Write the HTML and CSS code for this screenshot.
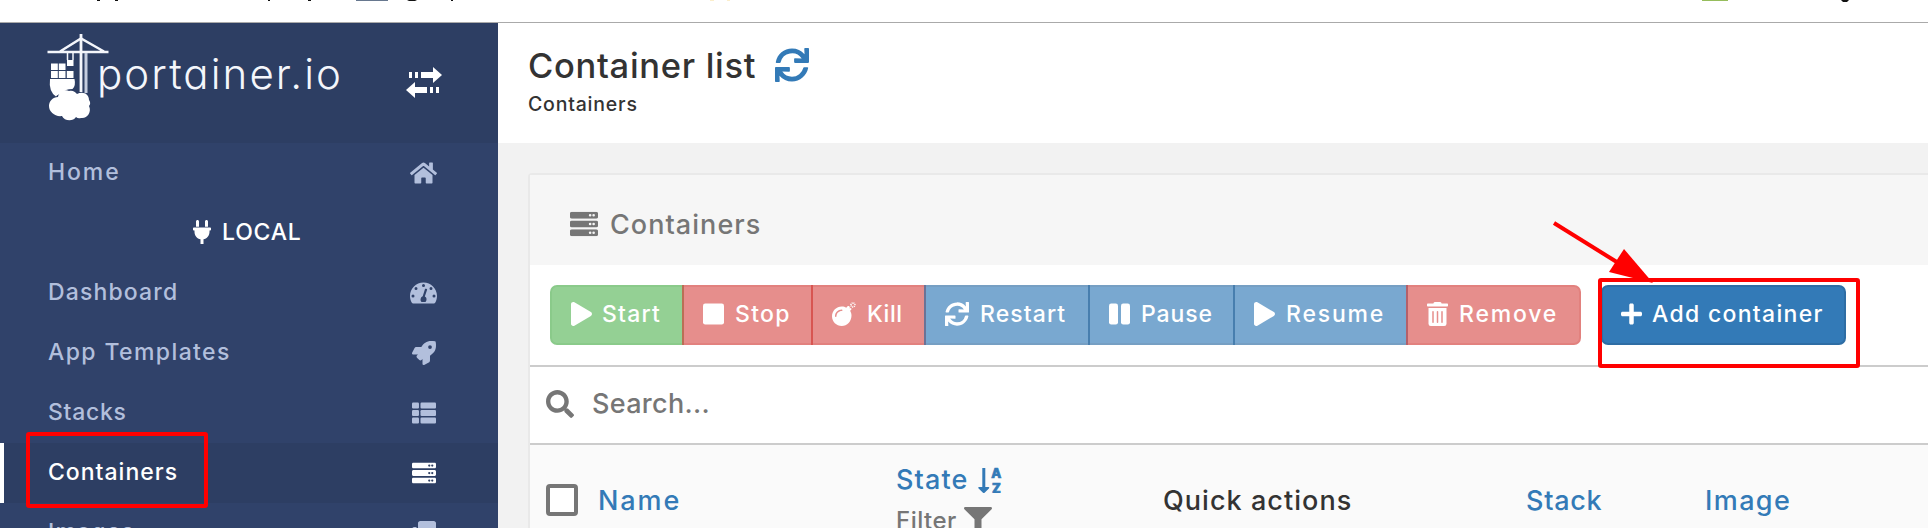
FILE: index.html
```html
<!DOCTYPE html>
<html lang="en">
<head>
<meta charset="utf-8">
<title>Portainer</title>
<link rel="stylesheet" href="styles.css">
</head>
<body>
<svg class="defs" width="0" height="0" aria-hidden="true">
  <symbol id="play" viewBox="0 0 448 512"><path d="M424.4 214.7L72.4 6.6C43.8-10.3 0 6.1 0 47.9V464c0 37.5 40.7 60.1 72.4 41.3l352-208c31.4-18.5 31.5-64.1 0-82.6z"/></symbol>
  <symbol id="sync" viewBox="0 0 512 512"><path d="M440.65 12.57l4 82.77A247.16 247.16 0 0 0 255.83 8C134.73 8 33.91 94.92 12.29 209.82A12 12 0 0 0 24.09 224h49.05a12 12 0 0 0 11.67-9.26 175.91 175.91 0 0 1 317-56.94l-101.46-4.86a12 12 0 0 0-12.57 12v47.41a12 12 0 0 0 12 12H500a12 12 0 0 0 12-12V12a12 12 0 0 0-12-12h-47.37a12 12 0 0 0-11.98 12.57zM255.83 432a175.61 175.61 0 0 1-146-77.8l101.8 4.87a12 12 0 0 0 12.57-12v-47.4a12 12 0 0 0-12-12H12a12 12 0 0 0-12 12V500a12 12 0 0 0 12 12h47.35a12 12 0 0 0 12-12.6l-4.15-82.57A247.17 247.17 0 0 0 255.83 504c121.11 0 221.93-86.92 243.55-201.82a12 12 0 0 0-11.8-14.18h-49.05a12 12 0 0 0-11.67 9.26A175.86 175.86 0 0 1 255.83 432z"/></symbol>
  <symbol id="unit" viewBox="0 0 512 128"><path fill-rule="evenodd" d="M480 128H32c-17.7 0-32-14.3-32-32V32C0 14.300 14.300 0 32 0h448c17.700 0 32 14.300 32 32v64c0 17.700-14.300 32-32 32zM432 40a24 24 0 1 0 0 48 24 24 0 0 0 0-48zM368 40a24 24 0 1 0 0 48 24 24 0 0 0 0-48z"/></symbol>
  <symbol id="server" viewBox="0 0 512 512"><use href="#unit" y="32" width="512" height="128"/><use href="#unit" y="192" width="512" height="128"/><use href="#unit" y="352" width="512" height="128"/></symbol>
</svg>

<div class="browser-strip">
  <svg width="1928" height="22" viewBox="0 0 1928 22">
    <g fill="#111"><path d="M97 0h3v1h-3zM115 0h3v1h-3zM268 0h2v1h-2zM308 0h3v1h-3zM407 0h10l-2 1h-6zM451 0h2v1h-2zM1841 0h8l-2 2h-4z"/></g>
    <path fill="#67788f" d="M356 0h32v1h-32z"/>
    <path fill="#96bd5c" d="M1702 0h26v1h-26z"/>
    <path fill="#fbeecb" d="M710 0h4v1h-4zM727 0h3v1h-3z"/>
  </svg>
</div>

<div class="app">
  <aside class="sidebar">
    <div class="sidebar-header">
      <svg class="logo" width="300" height="92" viewBox="44 32 300 92">
        <g fill="none" stroke="#f4f6fb">
          <path stroke-width="2.400" d="M47.500 52H108.500M60 51.500L81 38.500 104 51.500"/>
          <path stroke-width="1.500" d="M67.500 53v7M73 53v7"/>
          <path stroke-width="2.800" d="M81 34v58"/>
          <path stroke-width="3" stroke="#c5cddf" d="M86 53v40"/>
        </g>
        <path fill="#fff" d="M67 60h6.500v6H67zM51 63.500h6.800v6.500H51zM58.800 63.500h6.700v6.500h-6.700zM51 71h6.800v7H51zM58.800 71h6.700v7h-6.700zM66.800 71h6.700v7h-6.700zM50 79h24.500q1.500 7-2 10-8 0-9.500 4-5 1-7 3.500-7.500-5-6-17.500z"/>
        <path fill="#fff" d="M58 97c1-5 7-8 11-6 4-1 6 1 8 3 6-3 12 0 12 6 2 3 1 5 0 6 3 6-2 13-8 12q-3 1-5-1c-3 5-12 4-14-1-7 1-13-4-13-10 0-5 4-9 9-9z"/>
        <text class="logo-text" x="97" y="89" textLength="244" lengthAdjust="spacing">portainer.io</text>
      </svg>
      <svg class="toggle" width="38" height="34" viewBox="0 0 38 34"><path d="M4 6h3v6H4zM10 6h3v6h-3zM16 6h12V1l9 8-9 8v-5H16zM10 21h12v6H10v5L1 24l9-8zM25 21h3v6h-3zM31 21h3v6h-3z"/></svg>
    </div>
    <nav class="nav">
      <a class="nav-item"><span class="t-home">Home</span>
        <svg class="ni wide" viewBox="0 0 576 512" width="27" height="24"><path d="M280.370 148.260L96 300.110V464a16 16 0 0 0 16 16l112.060-.29a16 16 0 0 0 15.920-16V368a16 16 0 0 1 16-16h64a16 16 0 0 1 16 16v95.640a16 16 0 0 0 16 16.050L464 480a16 16 0 0 0 16-16V300L295.670 148.260a12.190 12.190 0 0 0-15.300 0zM571.600 251.470L488 182.560V44.050a12 12 0 0 0-12-12h-56a12 12 0 0 0-12 12v72.610L318.470 43a48 48 0 0 0-61 0L4.340 251.470a12 12 0 0 0-1.600 16.900l25.500 31A12 12 0 0 0 45.150 301l235.220-193.740a12.190 12.190 0 0 1 15.300 0L530.900 301a12 12 0 0 0 16.900-1.600l25.500-31a12 12 0 0 0-1.700-16.930z"/></svg></a>
      <div class="nav-title">
        <svg viewBox="0 0 384 512" width="18" height="24"><path d="M256 144V32c0-17.673 14.327-32 32-32s32 14.327 32 32v112h-64zm112 16H16c-8.837 0-16 7.163-16 16v32c0 8.837 7.163 16 16 16h16v32c0 77.406 54.969 141.971 128 156.796V512h64v-99.204c73.031-14.825 128-79.390 128-156.796v-32h16c8.837 0 16-7.163 16-16v-32c0-8.837-7.163-16-16-16zm-240-16V32c0-17.673-14.327-32-32-32S64 14.327 64 32v112h64z"/></svg>
        <span class="t-local">LOCAL</span></div>
      <a class="nav-item"><span class="t-dashboard">Dashboard</span>
        <svg class="ni wide" viewBox="0 0 576 512" width="27" height="24"><path fill-rule="evenodd" d="M288 32C129 32 0 161 0 320c0 53 14 102 39 145 6 9 16 15 27 15h444c11 0 21-6 27-15 25-43 39-92 39-145C576 161 447 32 288 32zM288 64a32 32 0 1 1 0 64 32 32 0 0 1 0-64zM128 128a32 32 0 1 1 0 64 32 32 0 0 1 0-64zM448 128a32 32 0 1 1 0 64 32 32 0 0 1 0-64zM64 288a32 32 0 1 1 0 64 32 32 0 0 1 0-64zM512 288a32 32 0 1 1 0 64 32 32 0 0 1 0-64zM320 172c5-17 50-6 45 13l-49 148c48 20 46 93 12 115h-80c-36-25-28-105 23-123z"/></svg></a>
      <a class="nav-item"><span class="t-templates">App Templates</span>
        <svg class="ni" viewBox="0 0 512 512" width="24" height="24"><path d="M505.120 19.090c-1.190-5.530-6.660-11-12.210-12.180C460.720 0 435.500 0 410.400 0 307.200 0 245.300 55.200 199 128H94.900c-16.300 0-35.600 11.900-42.900 26.500L2.500 253.300A28.400 28.400 0 0 0 0 264a24 24 0 0 0 24 24h103.900l-22.500 22.500c-11.400 11.400-13 32.300 0 45.300L156.200 406.600c11.200 11.200 32.100 13.200 45.300 0L224 384.100V488a24 24 0 0 0 24 24 28.600 28.600 0 0 0 10.700-2.500l98.700-49.400c14.600-7.300 26.500-26.500 26.500-42.900V312.800c72.600-46.300 128-108.400 128-211.100.1-25.200.1-50.400-6.800-82.600zM384 168a40 40 0 1 1 0-80 40 40 0 0 1 0 80z"/></svg></a>
      <a class="nav-item"><span class="t-stacks">Stacks</span>
        <svg class="ni" viewBox="0 0 512 512" width="24" height="24"><rect y="32" width="149" height="128" rx="24"/><rect x="181" y="32" width="331" height="128" rx="24"/><rect y="192" width="149" height="128" rx="24"/><rect x="181" y="192" width="331" height="128" rx="24"/><rect y="352" width="149" height="128" rx="24"/><rect x="181" y="352" width="331" height="128" rx="24"/></svg></a>
      <a class="nav-item active"><span class="t-containers">Containers</span>
        <svg class="ni" width="24" height="24"><use href="#server"/></svg></a>
      <a class="nav-item"><span class="t-images">Images</span>
        <svg class="ni" viewBox="0 0 512 512" width="24" height="24"><path d="M464 0c26.500 0 48 21.500 48 48v288c0 26.500-21.500 48-48 48H176c-26.500 0-48-21.500-48-48V48c0-26.500 21.500-48 48-48h288M176 416c-44 0-80-36-80-80V128H48c-26.500 0-48 21.500-48 48v288c0 26.500 21.500 48 48 48h288c26.500 0 48-21.500 48-48v-48H176z"/></svg></a>
    </nav>
  </aside>

  <main class="main">
    <header class="page-header">
      <div class="title"><span class="t-title">Container list</span><svg width="34" height="34"><use href="#sync"/></svg></div>
      <div class="crumb">Containers</div>
    </header>
    <section class="widget">
      <div class="widget-header"><svg width="28" height="28"><use href="#server"/></svg><span>Containers</span></div>
      <div class="actions">
        <div class="group">
          <button class="btn green w-start"><svg width="21" height="24"><use href="#play"/></svg><span class="t-start">Start</span></button>
          <button class="btn red w-stop"><svg width="21" height="24" viewBox="0 0 448 512"><rect y="32" width="448" height="448" rx="48"/></svg><span class="t-stop">Stop</span></button>
          <button class="btn red w-kill"><svg width="24" height="24" viewBox="0 0 512 512"><path fill-rule="evenodd" d="M208 96c40 0 70 10 96 24l28-27c10-9 24-9 34 0l20 20-14 14 13 13 16-15 8 8c9 9 9 23 0 32l-22 23c17 31 29 67 29 100 0 124-94 224-208 224S0 418 0 304 94 96 208 96zM96 304c0-62 50-112 112-112 9 0 16-7 16-16s-7-16-16-16c-80 0-144 64-144 144 0 9 7 16 16 16s16-7 16-16z"/><path stroke="#fff" stroke-width="34" stroke-dasharray="20 14.500" fill="none" d="M404 62a42 42 0 1 1 84 0 42 42 0 1 1-84 0z"/></svg><span class="t-kill">Kill</span></button>
          <button class="btn blue w-restart"><svg width="24" height="24"><use href="#sync"/></svg><span class="t-restart">Restart</span></button>
          <button class="btn blue w-pause"><svg width="21" height="24" viewBox="0 0 448 512"><rect y="32" width="192" height="448" rx="48"/><rect x="256" y="32" width="192" height="448" rx="48"/></svg><span class="t-pause">Pause</span></button>
          <button class="btn blue w-resume"><svg width="21" height="24"><use href="#play"/></svg><span class="t-resume">Resume</span></button>
          <button class="btn red w-remove"><svg width="21" height="24" viewBox="0 0 448 512"><path d="M32 464a48 48 0 0 0 48 48h288a48 48 0 0 0 48-48V128H32zm272-256a16 16 0 0 1 32 0v224a16 16 0 0 1-32 0zm-96 0a16 16 0 0 1 32 0v224a16 16 0 0 1-32 0zm-96 0a16 16 0 0 1 32 0v224a16 16 0 0 1-32 0zM432 32H312l-9.400-18.700A24 24 0 0 0 281.100 0H166.800a23.720 23.720 0 0 0-21.400 13.300L136 32H16A16 16 0 0 0 0 48v32a16 16 0 0 0 16 16h416a16 16 0 0 0 16-16V48a16 16 0 0 0-16-16z"/></svg><span class="t-remove">Remove</span></button>
        </div>
        <button class="btn add"><svg width="21" height="24" viewBox="0 0 448 512"><path d="M416 208H272V64c0-17.670-14.330-32-32-32h-32c-17.670 0-32 14.330-32 32v144H32c-17.670 0-32 14.330-32 32v32c0 17.670 14.330 32 32 32h144v144c0 17.670 14.330 32 32 32h32c17.670 0 32-14.330 32-32V304h144c17.670 0 32-14.330 32-32v-32c0-17.670-14.330-32-32-32z"/></svg><span class="t-add">Add container</span></button>
      </div>
      <div class="search">
        <svg width="28" height="28" viewBox="0 0 512 512"><path d="M505 442.700L405.300 343c-4.500-4.500-10.600-7-17-7H372c27.600-35.300 44-79.700 44-128C416 93.100 322.900 0 208 0S0 93.100 0 208s93.100 208 208 208c48.300 0 92.700-16.400 128-44v16.300c0 6.400 2.500 12.500 7 17l99.700 99.700c9.400 9.400 24.600 9.400 33.900 0l28.300-28.300c9.400-9.400 9.400-24.600.1-34zM208 336c-70.700 0-128-57.200-128-128 0-70.700 57.200-128 128-128 70.700 0 128 57.200 128 128 0 70.700-57.200 128-128 128z"/></svg>
        <span class="t-search">Search...</span>
      </div>
      <div class="thead">
        <div><span class="checkbox"></span></div>
        <div class="link t-name">Name</div>
        <div>
          <div class="state link"><span class="t-state">State</span>
            <svg width="24" height="26" viewBox="0 0 24 26"><path d="M4.300 1h3v19h3.200q1.300.3.400 1.400L6.600 25.700q-.8.600-1.600 0L.6 21.400q-.9-1.100.4-1.400h3.300z"/><text class="az" x="13.300" y="11">A</text><text class="az" x="13.900" y="25.500">Z</text></svg></div>
          <div class="filter"><span class="t-filter">Filter</span>
            <svg width="28" height="28" viewBox="0 0 512 512"><path d="M487.976 0H24.028C2.710 0-8.047 25.866 7.058 40.971L192 225.941V432c0 7.831 3.821 15.170 10.237 19.662l80 55.980C298.020 518.690 320 507.493 320 487.980V225.941l184.947-184.970C520.021 25.896 509.338 0 487.976 0z"/></svg></div>
        </div>
        <div class="t-quick">Quick actions</div>
        <div class="link t-stack">Stack</div>
        <div class="link t-image">Image</div>
      </div>
    </section>
  </main>
</div>

<div class="mark mark-nav"></div>
<div class="mark mark-add"></div>
<svg class="arrow" width="104" height="66" viewBox="0 0 104 66"><path stroke="#f00" stroke-width="4" d="M4 6L70 47"/><path fill="#f00" d="M103 66L74 32 59 55z"/></svg>
</body>
</html>
```
FILE: styles.css
```css
* { box-sizing: border-box; }
body { margin: 0; height: 528px; overflow: hidden; position: relative; background: #fff; color: #333; font-family: Inter, "Liberation Sans", sans-serif; font-size: 23px; font-weight: 500; white-space: nowrap; }
svg { display: block; fill: currentColor; flex: none; }
.defs { position: absolute; }
.browser-strip { height: 23px; border-bottom: 1px solid #aaa; }
.app { display: flex; height: 505px; overflow: hidden; }

.sidebar { width: 498px; flex: none; background: #30426a; color: #b2bfdc; }
.sidebar-header { height: 120px; background: #2d3e63; color: #fff; display: flex; justify-content: space-between; align-items: flex-start; padding: 9px 55px 0 44px; }
.logo-text { font-size: 42px; font-weight: 350; font-feature-settings: "cv11"; fill: #f4f6fb; }
.toggle { margin-top: 34px; }
.nav-item { display: flex; height: 60px; align-items: center; justify-content: space-between; padding: 0 62px 3px 48px; }
.nav-item .ni { margin-top: 3px; }
.nav-item .wide { margin-right: -1px; }
.nav-item.active { background: #2d3e63; color: #fff; border-left: 4px solid #fff; padding-left: 44px; }
.nav-title { display: flex; height: 60px; align-items: center; gap: 11px; padding: 0 0 2px 193px; color: #fff; }
.t-home { letter-spacing: 1.9px; }
.t-local { letter-spacing: .8px; }
.t-dashboard { letter-spacing: 1.15px; }
.t-templates { letter-spacing: 1.4px; }
.t-stacks { letter-spacing: .7px; }
.t-containers { letter-spacing: 1px; }
.t-images { letter-spacing: 1.2px; }

.main { flex: 1; min-width: 0; background: #f2f2f2; }
.page-header { height: 120px; background: #fff; padding: 20px 0 0 30px; }
.title { display: flex; align-items: center; height: 44px; font-size: 34.5px; letter-spacing: .7px; }
.title span { width: 247px; }
.title svg { color: #337ab7; }
.crumb { height: 34px; line-height: 34px; font-size: 19.5px; letter-spacing: .8px; }
.widget { margin: 30px 0 0 30px; border: 2px solid #e9e9e9; border-right: 0; border-radius: 4px 0 0 0; background: #fff; height: 400px; font-size: 27px; }
.widget-header { height: 90px; background: #f6f6f6; color: #767676; display: flex; align-items: center; gap: 12px; padding: 8px 0 0 40px; letter-spacing: 1.05px; }
.actions { height: 102px; display: flex; gap: 20px; padding: 20px 0 0 20px; border-bottom: 2px solid #ccc; }
.group { display: flex; }
.btn { display: flex; height: 60px; align-items: center; gap: 11px; border: 2px solid; margin: 0; padding: 0 0 3px 19px; color: #fff; font: 500 23px Inter, sans-serif; }
.btn svg { margin-top: 1px; }
.btn.green { background: #5cb85c; border-color: #4cae4c; }
.btn.red { background: #d9534f; border-color: #d43f3a; }
.btn.blue { background: #337ab7; border-color: #2e6da4; }
.group .btn { opacity: .65; }
.group .btn + .btn { margin-left: -2px; }
.group .btn:last-child { border-radius: 0 7px 7px 0; }
.group .btn:first-child { border-radius: 7px 0 0 7px; gap: 10px; }
.w-start { width: 134px; letter-spacing: 1.2px; }
.w-stop { width: 131px; letter-spacing: 1.3px; }
.w-kill { width: 115px; letter-spacing: .5px; }
.w-restart { width: 166px; letter-spacing: 1.1px; }
.w-pause { width: 147px; letter-spacing: .9px; }
.w-resume { width: 175px; letter-spacing: 1.8px; }
.w-remove { width: 175px; letter-spacing: 1.8px; }
.btn.add { width: 245px; background: #337ab7; border-color: #2e6da4; border-radius: 7px; padding-left: 18px; gap: 10px; letter-spacing: 1.3px; }

.search { height: 78px; display: flex; align-items: center; gap: 18px; padding: 0 0 3px 16px; border-bottom: 2px solid #ccc; color: #767676; letter-spacing: .3px; }
.thead { height: 110px; display: grid; grid-template-columns: 52px 298px 267px 363px 179px 1fr; align-items: center; padding-left: 16px; background: #fafafa; }
.link { color: #337ab7; }
.checkbox { display: block; width: 32px; height: 32px; border: 4px solid #767676; border-radius: 4px; background: #fff; }
.state, .filter { display: flex; height: 41px; align-items: center; }
.state span { width: 82px; letter-spacing: 1.1px; }
.filter { color: #767676; font-size: 24px; }
.filter span { width: 68px; letter-spacing: .5px; }
.t-name { letter-spacing: 1.9px; }
.t-quick { letter-spacing: 1.05px; }
.t-stack { letter-spacing: .7px; }
.t-image { letter-spacing: 1.4px; }
.az { font-size: 13px; font-weight: 800; letter-spacing: 0; stroke: currentColor; stroke-width: .7px; }

.mark { position: absolute; border: 4px solid #f00; border-radius: 3px; }
.mark-nav { left: 26px; top: 432px; width: 182px; height: 76px; }
.mark-add { left: 1598px; top: 278px; width: 262px; height: 90px; }
.arrow { position: absolute; left: 1550px; top: 217px; }
```
